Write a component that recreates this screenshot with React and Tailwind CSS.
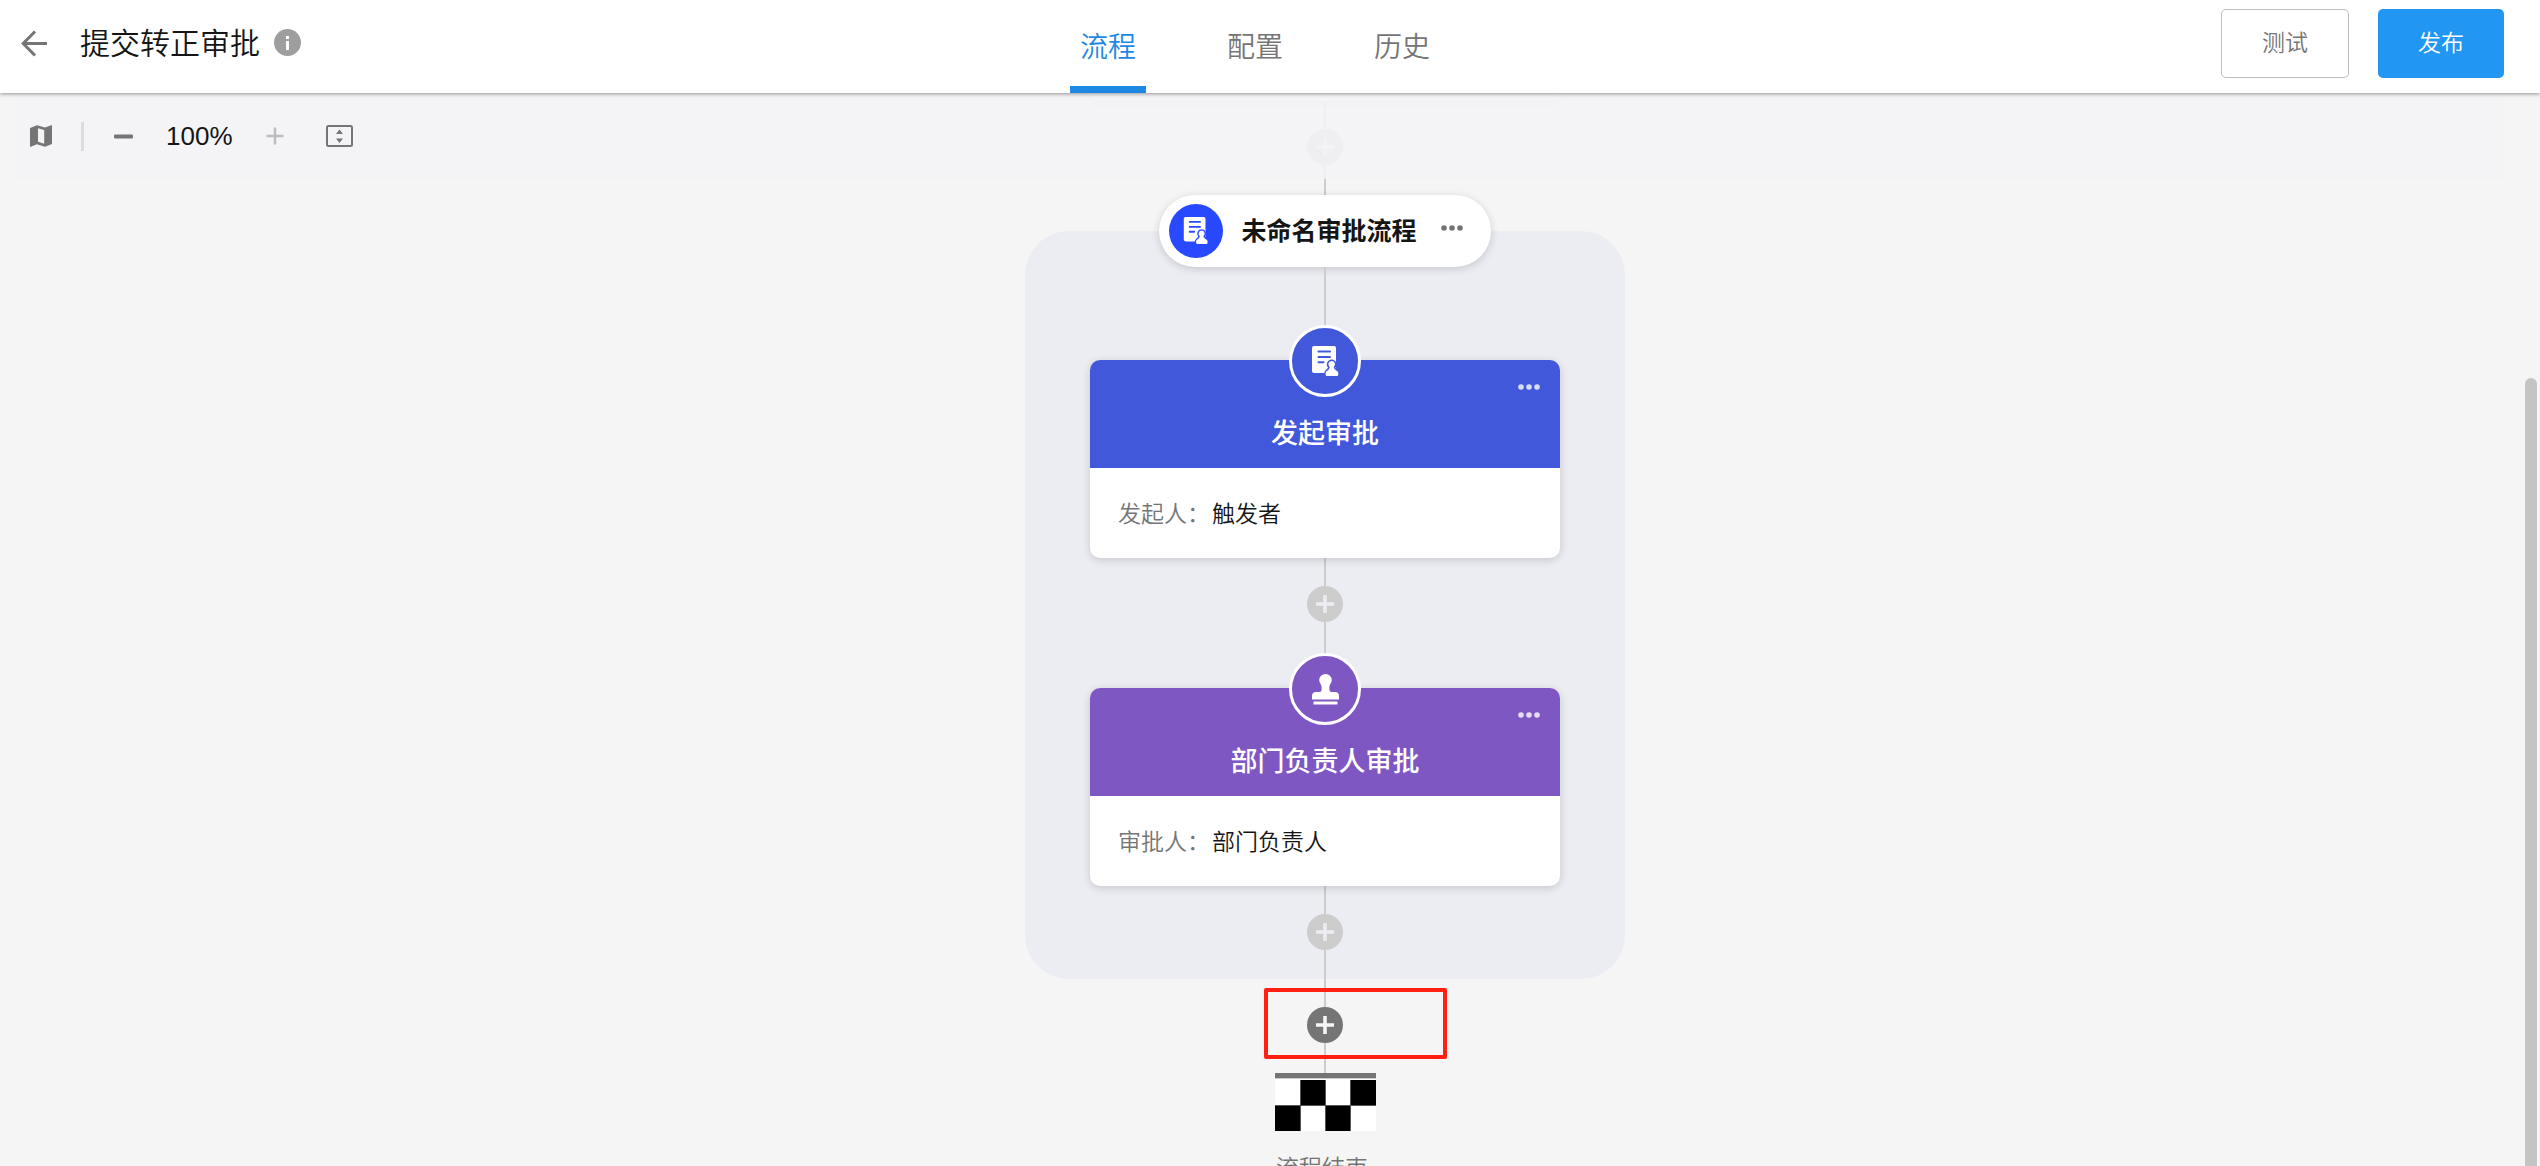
import { useState } from "react";
import clsx from "clsx";

const tabs = ["流程", "配置", "历史"];

function BackIcon() {
  return (
    <svg width="27" height="27" viewBox="0 0 27 27" fill="none" stroke="#757575" strokeWidth="3">
      <path d="M26 13.5H3M14 1.5L2.2 13.5L14 25.5" />
    </svg>
  );
}

function InfoIcon() {
  return (
    <svg width="27" height="27" viewBox="0 0 27 27">
      <circle cx="13.5" cy="13.5" r="13.5" fill="#9e9e9e" />
      <path d="M12 7h3v3h-3zM12 12h3v9h-3z" fill="#fff" />
    </svg>
  );
}

function MapIcon() {
  return (
    <svg width="22" height="22" viewBox="0 0 22 22" fill="#757575">
      <path
        fillRule="evenodd"
        d="M0 3L7 .2L15 2.5L22 0V19L15 21.8L7 19.3L0 22ZM8 3.2V16.8L14.2 18.8V5Z"
      />
    </svg>
  );
}

function FitIcon() {
  return (
    <svg width="27" height="22" viewBox="0 0 27 22">
      <rect x="1" y="1" width="25" height="20" rx="1.5" fill="none" stroke="#757575" strokeWidth="2" />
      <path d="M13.5 4.5L17 9H10ZM13.5 18L17 13.5H10Z" fill="#757575" />
    </svg>
  );
}

function FormIcon({ size = 31, color }) {
  return (
    <svg width={size} height={size} viewBox="0 0 31 31">
      <rect x="2" y="0" width="24" height="27" rx="2" fill="#fff" />
      <path d="M8.5 5.5H20M8.5 11H20M8.5 16.3H13.5" stroke={color} strokeWidth="2" strokeLinecap="round" />
      <path
        d="M21.7 15a3.4 3.4 0 0 1 2 6.1c.2 2 1.6 2.7 3.6 4.2c1 .8 1 1.5 1 3.2q0 1.5-1.5 1.5h-9.7q-1.5 0-1.5-1.5c0-1.7 0-2.4 1-3.2c2-1.5 3-2.2 3.1-4.2a3.4 3.4 0 0 1 2-6.1z"
        fill="#fff"
        stroke={color}
        strokeWidth="3"
        paintOrder="stroke"
      />
    </svg>
  );
}

function StampIcon() {
  return (
    <svg width="27" height="31" viewBox="0 0 27 31" fill="#fff">
      <path d="M13.5 0a6.3 6.3 0 0 1 6.3 6.3c0 2.6-2.4 4-2.4 6.7v2.5q0 2.5 2.5 2.5h3.1q4 0 4 4v3.5H0V22q0-4 4-4h3.1q2.5 0 2.5-2.5V13c0-2.7-2.4-4.1-2.4-6.7A6.3 6.3 0 0 1 13.5 0z" />
      <rect x="1.5" y="27.5" width="24" height="3" />
    </svg>
  );
}

function MoreButton({ className }) {
  return (
    <button type="button" aria-label="更多" className={className}>
      <svg width="22" height="6" viewBox="0 0 22 6" fill="currentColor">
        <circle cx="3" cy="3" r="2.8" />
        <circle cx="11" cy="3" r="2.8" />
        <circle cx="19" cy="3" r="2.8" />
      </svg>
    </button>
  );
}

function Line({ className }) {
  return <div className={clsx("w-[2px] bg-[#cccccc]", className)} />;
}

function AddNode({ tail, active }) {
  return (
    <>
      <Line className="h-7" />
      <button
        type="button"
        aria-label="添加节点"
        className={clsx(
          "size-9 rounded-full flex items-center justify-center",
          active ? "bg-[#757575] text-[#f5f5f5]" : "bg-[#cccccc] text-[#ecedf3]"
        )}
      >
        <svg width="18" height="18" viewBox="0 0 18 18" stroke="currentColor" strokeWidth="3.6">
          <path d="M9 0V18M0 9H18" />
        </svg>
      </button>
      <Line className={tail} />
    </>
  );
}

function NodeCard({ title, color, icon, label, value }) {
  return (
    <section className="relative w-[470px] rounded-[10px] bg-white shadow-[0_2px_8px_rgba(0,0,0,0.16)]">
      <div className={clsx("relative h-[108px] rounded-t-[10px] flex items-end justify-center pb-[14px]", color)}>
        <div
          className={clsx(
            "absolute -top-[35px] left-1/2 -translate-x-1/2 size-[72px] rounded-full border-3 border-white flex items-center justify-center",
            color
          )}
        >
          {icon}
        </div>
        <MoreButton className="absolute top-6 right-5 text-white/80" />
        <h3 className="text-[27px] leading-10 font-medium text-white">{title}</h3>
      </div>
      <p className="h-[90px] px-7 pt-[2px] flex items-center gap-[2px] text-[23px] text-[#151515]">
        <span className="text-[#757575]">{label}：</span>
        <span>{value}</span>
      </p>
    </section>
  );
}

function FinishFlag() {
  return (
    <svg width="101" height="58" viewBox="0 0 101 58">
      <rect width="101" height="58" fill="#fff" />
      <rect width="101" height="5" fill="#757575" />
      <rect y="5" width="101" height="1" fill="#ccc" />
      <path d="M25 7h25v25H25zM76 7h25v25H76zM0 33h25v25H0zM51 33h25v25H51z" fill="#000" />
      <path d="M0 32.5H101M25.5 7V58M50.5 7V58M75.5 7V58" stroke="#555" />
    </svg>
  );
}

export default function App() {
  const [activeTab, setActiveTab] = useState("流程");

  return (
    <div className="h-screen flex flex-col overflow-hidden bg-[#f5f5f5] text-[#151515] font-[350] font-['Liberation_Sans','Noto_Sans_CJK_SC',sans-serif]">
      <header className="relative z-20 h-[93px] flex-none flex bg-white pl-[6px] pr-9 shadow-[0_1px_4px_rgba(0,0,0,0.4)]">
        <div className="flex-1 flex items-center">
          <a href="#back" aria-label="返回" className="ml-[15px] mb-[6px]">
            <BackIcon />
          </a>
          <h1 className="ml-8 mb-[6px] text-[30px] leading-10">提交转正审批</h1>
          <button type="button" aria-label="说明" className="ml-[14px] mb-2">
            <InfoIcon />
          </button>
        </div>
        <nav className="flex gap-[71px]">
          {tabs.map((tab) => (
            <button
              key={tab}
              type="button"
              onClick={() => setActiveTab(tab)}
              className={clsx(
                "w-[76px] pt-[10px] text-[28px] border-b-[7px]",
                tab === activeTab ? "border-[#1e88e5] text-[#1e88e5]" : "border-transparent text-[#757575]"
              )}
            >
              {tab}
            </button>
          ))}
        </nav>
        <div className="flex-1 flex items-center justify-end gap-[29px] pb-[6px]">
          <button
            type="button"
            className="w-32 h-[69px] rounded-[5px] border border-[#bdbdbd] text-[23px] text-[#757575]"
          >
            测试
          </button>
          <button type="button" className="w-[126px] h-[69px] rounded-[5px] bg-[#2196f3] text-[23px] text-white">
            发布
          </button>
        </div>
      </header>

      <main className="relative flex-1 min-h-0 overflow-hidden">
        <div className="absolute z-10 top-0 left-[15px] right-9 h-[86px] bg-[#f4f4f7]/88 flex items-center pl-[15px]">
          <button type="button" aria-label="缩略图">
            <MapIcon />
          </button>
          <span className="ml-[29px] w-[3px] h-[29px] bg-[#dddddd]" />
          <button type="button" aria-label="缩小" className="ml-[30px]">
            <svg width="19" height="19" viewBox="0 0 19 19">
              <rect y="7.5" width="19" height="4" rx="1" fill="#757575" />
            </svg>
          </button>
          <span className="ml-[33px] text-[26px] leading-8">100%</span>
          <button type="button" aria-label="放大" className="ml-[33px]">
            <svg width="18" height="18" viewBox="0 0 18 18" stroke="#bdbdbd" strokeWidth="2.5">
              <path d="M9 .5V17.5M.5 9H17.5" />
            </svg>
          </button>
          <button type="button" aria-label="适应屏幕" className="ml-[42px]">
            <FitIcon />
          </button>
        </div>

        <div className="flex flex-col items-center pl-[110px]">
          <div className="w-[470px] h-2 rounded-b-[10px] bg-white shadow-[0_2px_8px_rgba(0,0,0,0.16)]" />
          <AddNode tail="h-[66px]" />

          <div className="w-[600px] rounded-[44px] bg-[#ecedf3] flex flex-col items-center">
            <div className="-mt-9 h-[72px] pl-[10px] pr-[28px] rounded-full bg-white flex items-center shadow-[0_2px_8px_rgba(0,0,0,0.16)]">
              <div className="size-[54px] rounded-full bg-[#2849ff] flex items-center justify-center">
                <FormIcon size={28} color="#2849ff" />
              </div>
              <h2 className="ml-[18px] text-[25px] leading-9 font-bold">未命名审批流程</h2>
              <MoreButton className="ml-6 pb-[6px] text-[#757575]" />
            </div>
            <Line className="h-[93px]" />
            <NodeCard
              title="发起审批"
              color="bg-[#4158db]"
              icon={<FormIcon color="#4158db" />}
              label="发起人"
              value="触发者"
            />
            <AddNode tail="h-[66px]" />
            <NodeCard
              title="部门负责人审批"
              color="bg-[#7e57c2]"
              icon={<StampIcon />}
              label="审批人"
              value="部门负责人"
            />
            <AddNode tail="h-[29px]" />
          </div>

          <div className="relative flex flex-col items-center">
            <AddNode tail="h-[30px]" active />
            <div className="absolute top-[9px] -left-[43px] w-[183px] h-[71px] rounded-[2px] border-4 border-[#ff2011] pointer-events-none" />
          </div>
          <FinishFlag />
          <p className="mt-[19px] pr-[6px] text-[23px] leading-9 text-[#757575]">流程结束</p>
        </div>

        <div className="absolute top-[285px] bottom-0 right-[3px] w-3 rounded-t-full bg-[#c4c4c4]" />
      </main>
    </div>
  );
}
